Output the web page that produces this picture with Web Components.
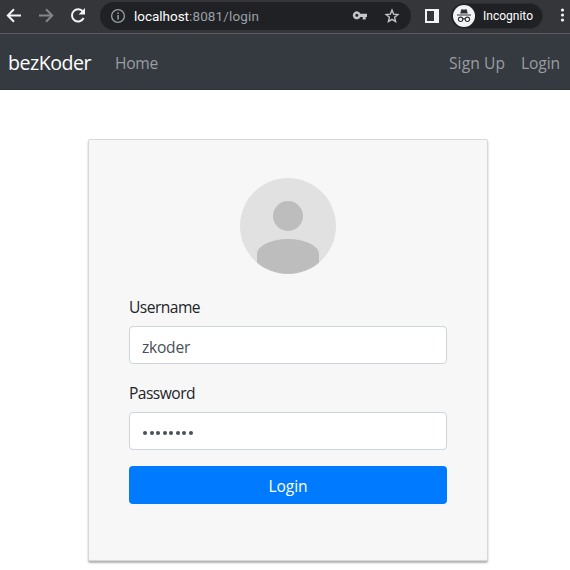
<!DOCTYPE html>
<html lang="en">
<head>
<meta charset="utf-8">
<title>bezKoder</title>
<style>
body{margin:0;background:#fff;font:15.6px/24px "Open Sans","Noto Sans",sans-serif;color:#212529;height:570px;overflow:hidden;--text-shift:1px}
</style>
</head>
<body>
<browser-toolbar></browser-toolbar>
<app-navbar brand="bezKoder">
  <nav-link w="43">Home</nav-link>
  <nav-link slot="end" w="56">Sign Up</nav-link>
  <nav-link slot="end" w="39">Login</nav-link>
</app-navbar>
<login-card>
  <profile-avatar></profile-avatar>
  <form-field label="Username" w="71"><fit-text w="48">zkoder</fit-text></form-field>
  <form-field label="Password" w="66"><password-dots count="8"></password-dots></form-field>
  <submit-button><fit-text w="39">Login</fit-text></submit-button>
</login-card>
<script>
function define(name, html, setup){
  customElements.define(name, class extends HTMLElement{
    connectedCallback(){
      if(this.shadowRoot) return;
      const root=this.attachShadow({mode:'open'});
      const t=document.createElement('template');
      t.innerHTML=html;
      root.append(t.content.cloneNode(true));
      if(setup) setup(this,root);
    }
  });
}

/* One-line text whose letter spacing is tuned so that it spans w pixels. */
define('fit-text', `<style>:host{display:inline-block;white-space:nowrap}span{display:inline-block;transform:translateY(var(--text-shift,0px))}</style><span><slot></slot></span>`, (el,root)=>{
  const span=root.querySelector('span');
  const w=+el.getAttribute('w'), n=el.textContent.length;
  const natural=span.getBoundingClientRect().width;
  if(w&&natural){
    span.style.letterSpacing=((w-natural)/n)+'px';
    el.style.width=w+'px';
  }
});

define('browser-toolbar', `<style>
:host{--text-shift:0px;display:flex;box-sizing:border-box;height:34px;background:#35363a;border-bottom:1px solid #5c5d60;align-items:center;padding:0 0 3px 5px;overflow:hidden;font:13.5px/20px "Roboto","Liberation Sans",sans-serif;color:#fff}
svg{display:block;flex:none}
.back{margin-right:14px}.fwd{margin-right:14px}.reload{margin-right:13px}
.url{display:flex;align-items:center;width:311px;height:28px;box-sizing:border-box;border-radius:14px;background:#202124;padding:0 11px 0 10px;flex:none;margin-top:2px}
.info{margin-right:8px}
.rest{color:#9aa0a6}
.gap{flex:1}
.key{margin-right:16px}
.panel{margin:2px 12px 0 14px}
.chip{display:flex;align-items:center;box-sizing:border-box;width:92px;height:26px;border-radius:13px;background:#202124;flex:none;font-size:12px;margin:1px 17px 0 0;padding-left:2px;gap:8px;border:1px solid #2b2c2f;border-left:0}
</style>
<svg class="back" width="18" height="18" viewBox="0 0 18 18" fill="none" stroke="#f1f3f4" stroke-width="2"><path d="M16 9.5H3M9 3.2 2.8 9.5 9 15.8"/></svg>
<svg class="fwd" width="18" height="18" viewBox="0 0 18 18" fill="none" stroke="#85868a" stroke-width="2"><path d="M2 9.5h13M9 3.2l6.2 6.3L9 15.8"/></svg>
<svg class="reload" width="18" height="18" viewBox="0 0 18 18"><path d="M14.6 12a6.1 6.1 0 1 1-.6-6.2" fill="none" stroke="#f1f3f4" stroke-width="2"/><path d="M16 2v6.4H9.6Z" fill="#f1f3f4"/></svg>
<div class="url">
<svg class="info" width="16" height="16" viewBox="0 0 16 16"><circle cx="8" cy="8" r="6.4" fill="none" stroke="#9aa0a6" stroke-width="1.3"/><path d="M7.3 7h1.5v4.4H7.3zM7.3 4.5h1.5V6H7.3z" fill="#9aa0a6"/></svg>
<fit-text w="55">localhost</fit-text><fit-text class="rest" w="70">:8081/login</fit-text>
<span class="gap"></span>
<svg class="key" width="16" height="16" viewBox="0 0 16 16"><path fill="#c4c5c7" fill-rule="evenodd" d="M8.4 5.7a4 4 0 1 0 0 3.3h2.3v2.4h3V9H15V5.7ZM4.8 5.8a1.5 1.5 0 1 1 0 3 1.5 1.5 0 0 1 0-3Z"/></svg>
<svg width="16" height="16" viewBox="0 0 16 16"><path fill="none" stroke="#c4c5c7" stroke-width="1.4" d="m8 2.1 1.6 4 4.3.4-3.3 2.8 1 4.3L8 11.3l-3.6 2.3 1-4.3-3.3-2.8 4.3-.4Z"/></svg>
</div>
<svg class="panel" width="14" height="14" viewBox="0 0 14 14"><path fill="#f1f3f4" fill-rule="evenodd" d="M0 0h14v14H0ZM2 2v10h7V2Z"/></svg>
<div class="chip">
<svg width="22" height="22" viewBox="0 0 22 22"><circle cx="11" cy="11" r="11" fill="#f1f3f4"/><path fill="#303135" d="M7.2 8.5 8.3 4.6Q8.6 4 9.3 4.2L11 4.7l1.7-.5q.7-.2 1 .4l1.1 3.9ZM4 9.4h14v1.1H4Z"/><g fill="none" stroke="#303135" stroke-width="1.1"><circle cx="7.6" cy="14.3" r="2.2"/><circle cx="14.4" cy="14.3" r="2.2"/><path d="M9.8 14q1.2-.8 2.4 0"/></g></svg>
<fit-text w="50">Incognito</fit-text>
</div>
<svg width="5" height="14" viewBox="0 0 5 14" fill="#f1f3f4"><circle cx="2.5" cy="2" r="1.6"/><circle cx="2.5" cy="7" r="1.6"/><circle cx="2.5" cy="12" r="1.6"/></svg>`);

define('nav-link', `<style>:host{display:block;color:#9a9da0}</style><fit-text></fit-text>`, (el,root)=>{
  const f=document.createElement('fit-text');
  f.setAttribute('w',el.getAttribute('w'));
  f.textContent=el.textContent;
  root.querySelector('fit-text').replaceWith(f);
});

define('app-navbar', `<style>
:host{display:flex;box-sizing:border-box;height:56px;padding:0 10px 0 8px;align-items:center;background:#343a40;border-bottom:1px solid #303439}
.brand{font-size:19.6px;color:#fff;margin-right:24px}
.start{flex:1;display:flex}.end{display:flex;gap:16px}
</style>
<div class="brand"></div><div class="start"><slot></slot></div><div class="end"><slot name="end"></slot></div>`, (el,root)=>{
  const f=document.createElement('fit-text');
  f.setAttribute('w','83');
  f.textContent=el.getAttribute('brand');
  root.querySelector('.brand').append(f);
});

define('login-card', `<style>
:host{display:flex;flex-direction:column;box-sizing:border-box;width:400px;height:422px;margin:49px 0 0 88px;padding:38px 40px;background:#f7f7f7;border:1px solid #d8d8d8;border-radius:2px;box-shadow:0 2px 2px rgba(0,0,0,.3)}
</style><slot></slot>`);

define('profile-avatar', `<style>:host{display:block;margin:0 auto 20px;height:96px}svg{display:block}</style>
<svg width="96" height="96" viewBox="0 0 96 96"><clipPath id="c"><circle cx="48" cy="48" r="48"/></clipPath><g clip-path="url(#c)"><path fill="#e1e1e1" d="M0 0h96v96H0z"/><g fill="#bdbdbd"><circle cx="48" cy="38" r="15"/><path d="M17 96V76C17 68 31 61 48 61s31 7 31 15v20Z"/></g></g></svg>`);

define('form-field', `<style>
:host{display:block;margin-bottom:16px}
.label{height:24px;margin-bottom:8px}
.box{display:flex;align-items:center;box-sizing:border-box;height:38px;padding:1px 12px 0;background:#fff;border:1px solid #ced4da;border-radius:4px;color:#495057}
</style><div class="label"></div><div class="box"><slot></slot></div>`, (el,root)=>{
  const f=document.createElement('fit-text');
  f.setAttribute('w',el.getAttribute('w'));
  f.textContent=el.getAttribute('label');
  root.querySelector('.label').append(f);
});

define('password-dots', `<style>:host{display:flex;gap:2.5px;padding:2px 0 0 1px}i{width:4px;height:4px;border-radius:50%;background:#495057}</style>`, (el,root)=>{
  for(let i=0;i<+el.getAttribute('count');i++) root.append(document.createElement('i'));
});

define('submit-button', `<style>:host{display:flex;align-items:center;justify-content:center;height:38px;border-radius:4px;background:#007bff;color:#fff}</style><slot></slot>`);
</script>
</body>
</html>
